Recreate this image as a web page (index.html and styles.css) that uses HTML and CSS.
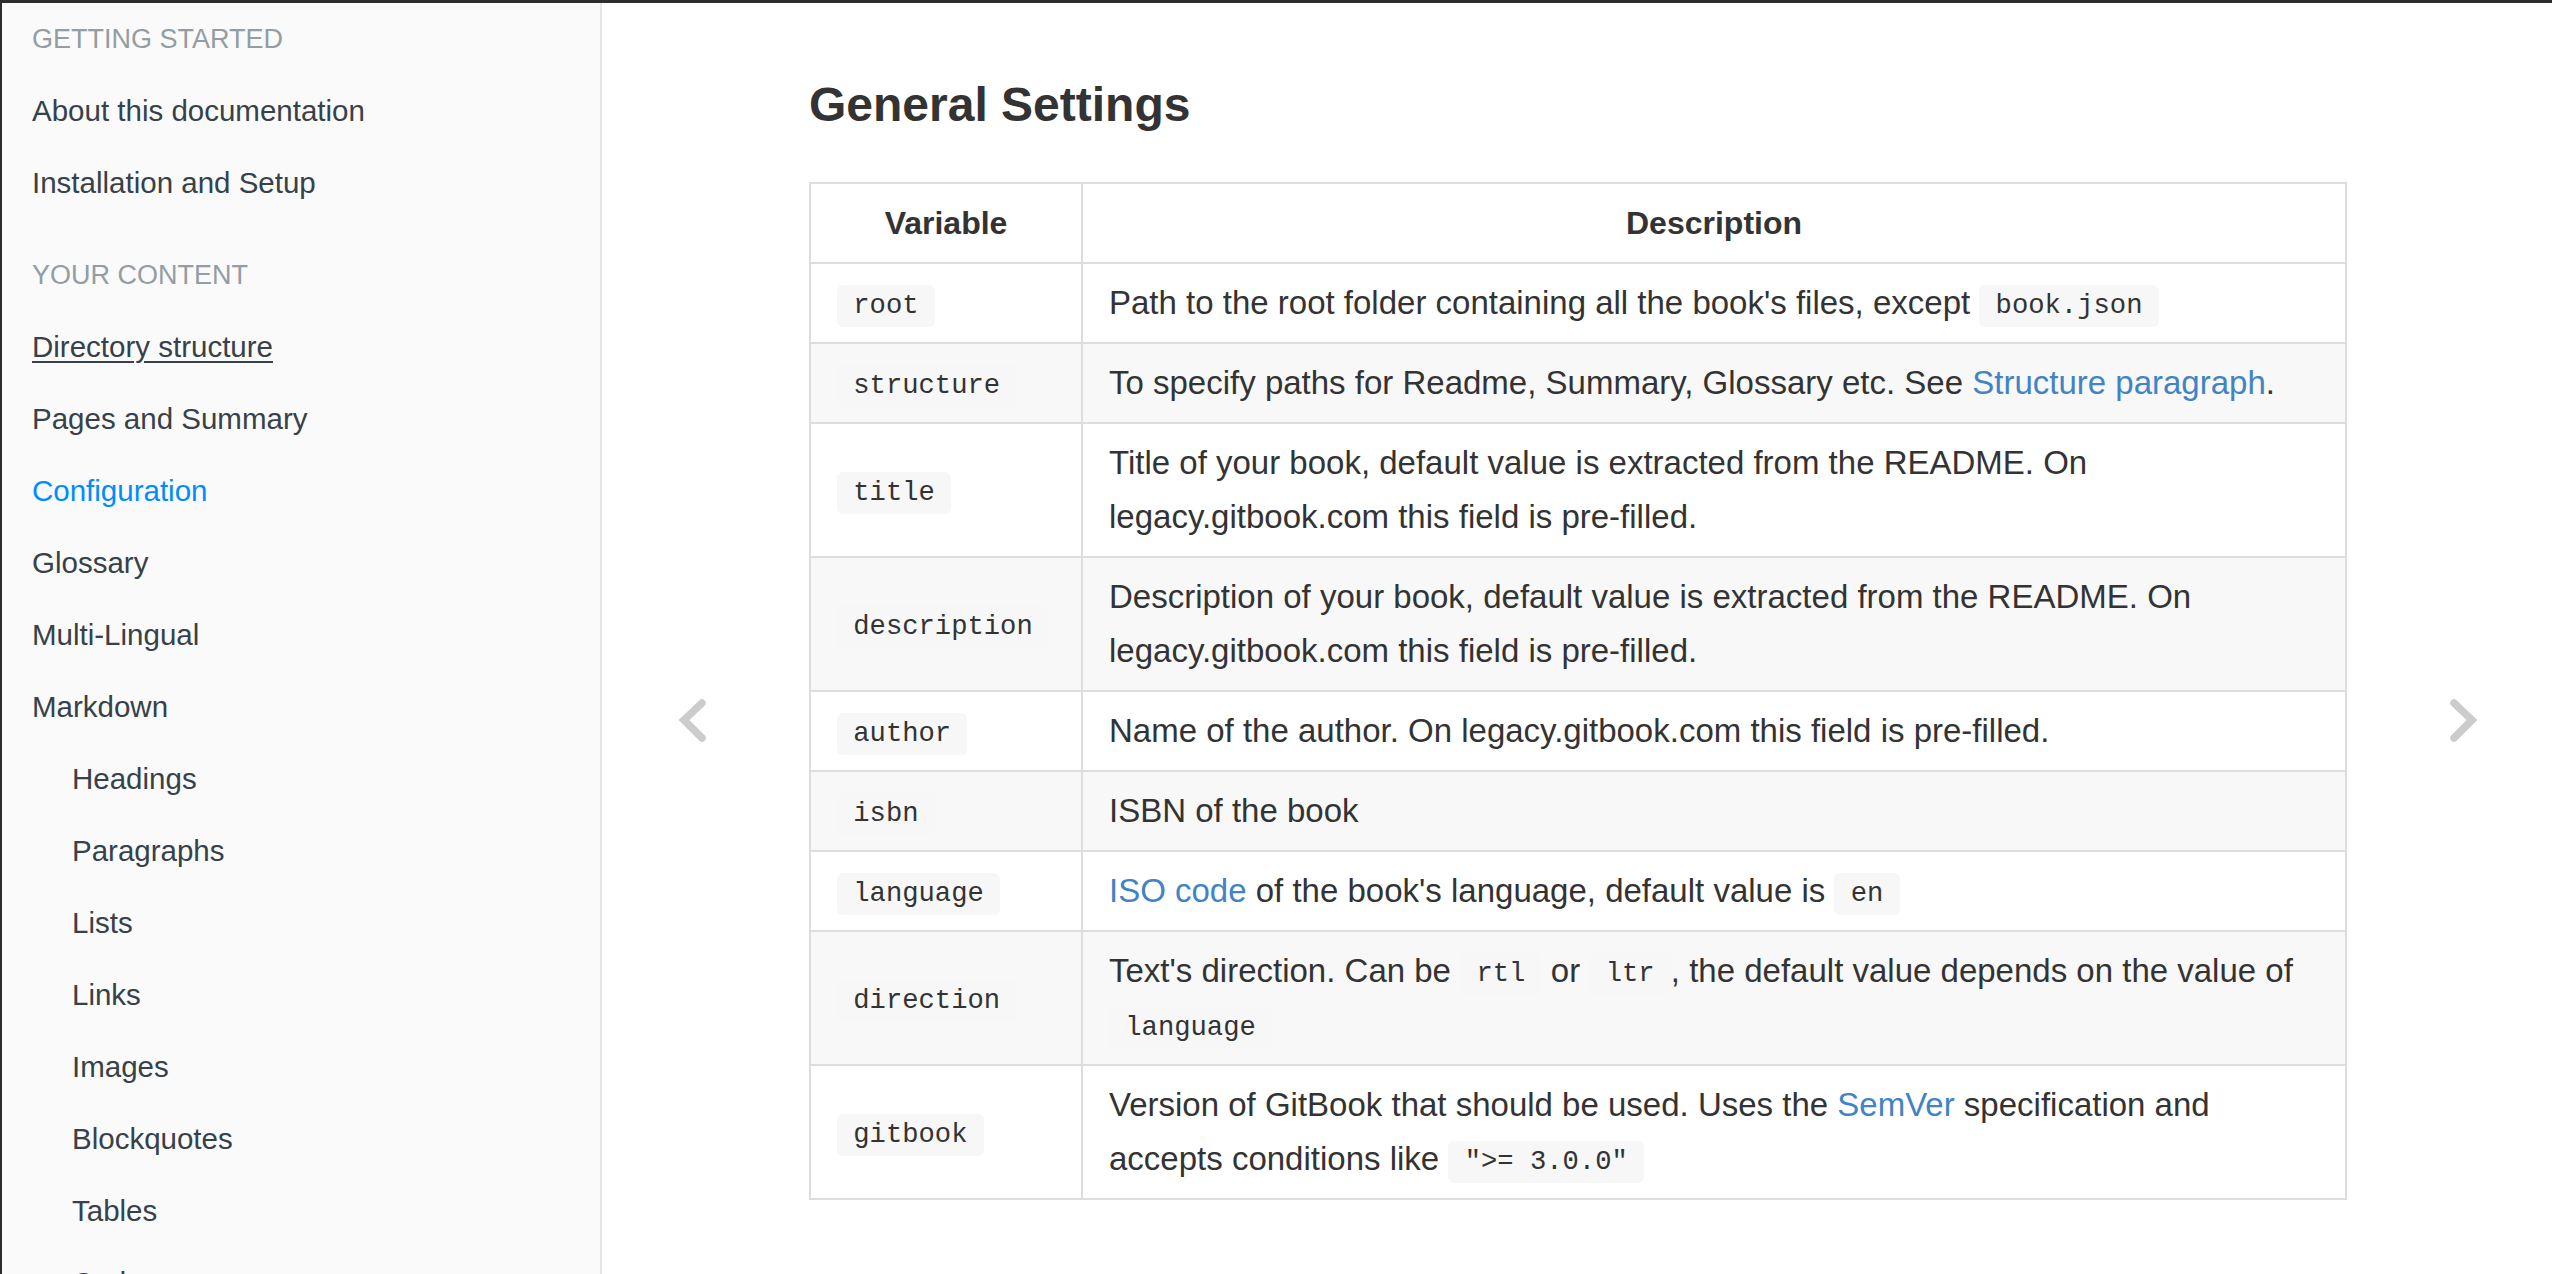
FILE: index.html
```html
<!DOCTYPE html>
<html lang="en">
<head>
<meta charset="utf-8">
<title>Configuration · GitBook Toolchain Documentation</title>
<link rel="stylesheet" href="styles.css">
</head>
<body>
<div class="topbar"></div>
<div class="book">
  <nav class="summary">
    <ul class="summary-list">
      <li class="header">Getting Started</li>
      <li class="chapter"><a>About this documentation</a></li>
      <li class="chapter"><a>Installation and Setup</a></li>
      <li class="header header-gap">Your Content</li>
      <li class="chapter"><a class="hover">Directory structure</a></li>
      <li class="chapter"><a>Pages and Summary</a></li>
      <li class="chapter"><a class="active">Configuration</a></li>
      <li class="chapter"><a>Glossary</a></li>
      <li class="chapter"><a>Multi-Lingual</a></li>
      <li class="chapter"><a>Markdown</a></li>
      <li class="chapter sub"><a>Headings</a></li>
      <li class="chapter sub"><a>Paragraphs</a></li>
      <li class="chapter sub"><a>Lists</a></li>
      <li class="chapter sub"><a>Links</a></li>
      <li class="chapter sub"><a>Images</a></li>
      <li class="chapter sub"><a>Blockquotes</a></li>
      <li class="chapter sub"><a>Tables</a></li>
      <li class="chapter sub"><a>Code</a></li>
    </ul>
  </nav>
  <main class="body">
    <div class="page-inner">
      <section class="markdown">
        <h2>General Settings</h2>
        <table>
          <thead>
            <tr><th class="col-var">Variable</th><th>Description</th></tr>
          </thead>
          <tbody>
            <tr><td><code>root</code></td><td>Path to the root folder containing all the book's files, except <code>book.json</code></td></tr>
            <tr><td><code>structure</code></td><td>To specify paths for Readme, Summary, Glossary etc. See <a>Structure paragraph</a>.</td></tr>
            <tr><td><code>title</code></td><td>Title of your book, default value is extracted from the README. On legacy.gitbook.com this field is pre-filled.</td></tr>
            <tr><td><code>description</code></td><td>Description of your book, default value is extracted from the README. On legacy.gitbook.com this field is pre-filled.</td></tr>
            <tr><td><code>author</code></td><td>Name of the author. On legacy.gitbook.com this field is pre-filled.</td></tr>
            <tr><td><code>isbn</code></td><td>ISBN of the book</td></tr>
            <tr><td><code>language</code></td><td><a>ISO code</a> of the book's language, default value is <code>en</code></td></tr>
            <tr><td><code>direction</code></td><td>Text's direction. Can be <code>rtl</code> or <code>ltr</code>, the default value depends on the value of <code>language</code></td></tr>
            <tr><td><code>gitbook</code></td><td>Version of GitBook that should be used. Uses the <a>SemVer</a> specification and<br>accepts conditions like <code>"&gt;= 3.0.0"</code></td></tr>
          </tbody>
        </table>
      </section>
    </div>
    <a class="nav-arrow nav-prev" aria-label="Previous page">
      <svg width="30" height="48" viewBox="0 0 30 48"><polyline points="24,7 6,24 24,42" fill="none" stroke="#cccccc" stroke-width="7.5" stroke-linecap="round" stroke-linejoin="miter"/></svg>
    </a>
    <a class="nav-arrow nav-next" aria-label="Next page">
      <svg width="30" height="48" viewBox="0 0 30 48"><polyline points="6,7 24,24 6,42" fill="none" stroke="#cccccc" stroke-width="7.5" stroke-linecap="round" stroke-linejoin="miter"/></svg>
    </a>
  </main>
</div>
</body>
</html>
```

FILE: styles.css
```css
html, body {
  margin: 0;
  padding: 0;
  height: 100%;
  overflow: hidden;
}

body {
  background: #ffffff;
  font-family: "Liberation Sans", Arial, Helvetica, sans-serif;
  color: #333333;
  border-left: 2px solid #2b2d2e;
  box-sizing: border-box;
}

.topbar {
  height: 3px;
  background: #2b2d2e;
}

.book {
  display: flex;
  height: calc(100% - 3px);
}

/* Sidebar */
.summary {
  width: 598px;
  flex: 0 0 598px;
  background: #fafafa;
  border-right: 2px solid #e6e6e6;
  overflow: hidden;
}

.summary-list {
  list-style: none;
  margin: 0;
  padding: 0;
}

.summary-list li {
  height: 72px;
  line-height: 72px;
  white-space: nowrap;
}

.summary-list .header {
  padding-left: 30px;
  font-size: 27px;
  color: #939da3;
  text-transform: uppercase;
}

.summary-list .header-gap {
  margin-top: 20px;
}

.summary-list .chapter a {
  display: block;
  padding-left: 30px;
  font-size: 29.5px;
  color: #364149;
  text-decoration: none;
}

.summary-list .sub a {
  padding-left: 70px;
}

.summary-list .chapter a.hover {
  text-decoration: underline;
  text-underline-offset: 4px;
  text-decoration-thickness: 2px;
}

.summary-list .chapter a.active {
  color: #008cff;
}

/* Main body */
.body {
  flex: 1;
  position: relative;
  overflow: hidden;
}

.page-inner {
  max-width: 1600px;
  margin: 0 auto;
  padding: 0 30px 0 32px;
  box-sizing: border-box;
}

.markdown {
  font-size: 33px;
  line-height: 54px;
  color: #333333;
}

.markdown h2 {
  margin: 73px 0 48px 0;
  font-size: 48px;
  line-height: 1.2;
  font-weight: 700;
  color: #333333;
}

.markdown table {
  width: 100%;
  border-collapse: collapse;
  border-spacing: 0;
}

.markdown th,
.markdown td {
  padding: 12px 26px;
  border: 2px solid #dddddd;
}

.markdown th {
  font-weight: 700;
  font-size: 32px;
  text-align: center;
}

.markdown .col-var {
  width: 218px;
}

.markdown tr {
  background: #ffffff;
}

.markdown tbody tr:nth-child(2n) {
  background: #f8f8f8;
}

.markdown a {
  color: #4183c4;
  text-decoration: none;
}

.markdown code {
  font-family: "Liberation Mono", "DejaVu Sans Mono", monospace;
  font-size: 27.2px;
  line-height: 1;
  padding: 5.4px;
  background: #f7f7f7;
  border-radius: 6px;
  color: #333333;
}

.markdown code::before,
.markdown code::after {
  content: "\00a0";
  letter-spacing: -0.2em;
}

/* Prev / next navigation arrows overlaying the page */
.nav-arrow {
  position: absolute;
  top: 693px;
  width: 30px;
  height: 48px;
  display: block;
}

.nav-prev {
  left: 76px;
}

.nav-next {
  left: 1846px;
}

.nav-arrow svg {
  display: block;
}
```
